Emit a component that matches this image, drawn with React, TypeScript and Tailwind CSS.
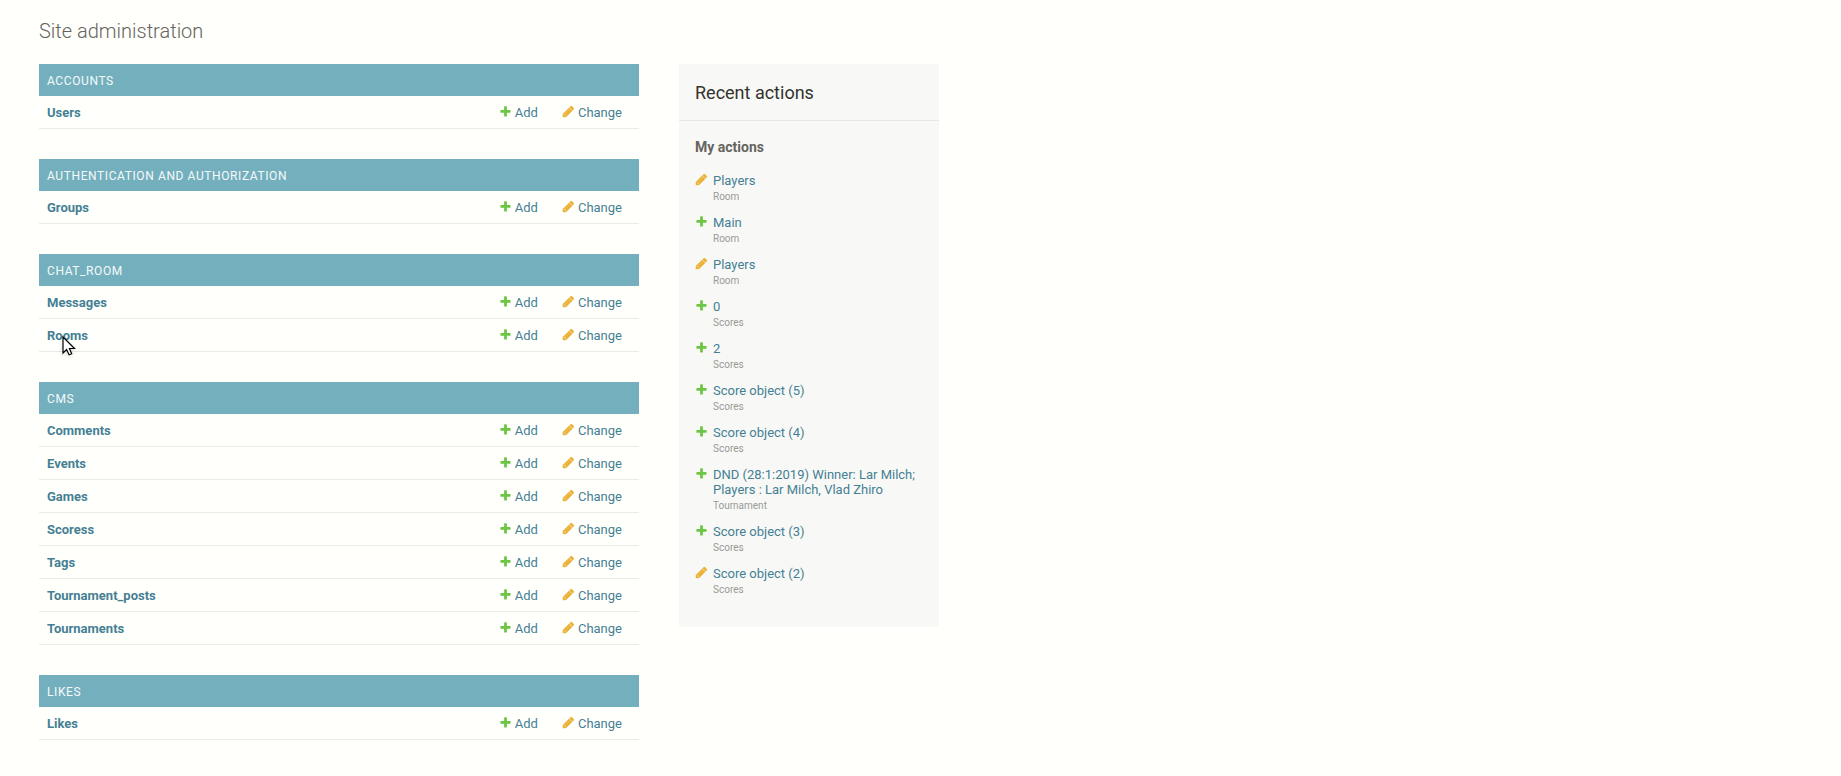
type Kind = 'add' | 'change';

interface AppModule {
  name: string;
  models: string[];
}

interface Action {
  kind: Kind;
  label: string;
  type: string;
}

const modules: AppModule[] = [
  { name: 'Accounts', models: ['Users'] },
  { name: 'Authentication and Authorization', models: ['Groups'] },
  { name: 'Chat_room', models: ['Messages', 'Rooms'] },
  {
    name: 'CMS',
    models: ['Comments', 'Events', 'Games', 'Scoress', 'Tags', 'Tournament_posts', 'Tournaments'],
  },
  { name: 'Likes', models: ['Likes'] },
];

const actions: Action[] = [
  { kind: 'change', label: 'Players', type: 'Room' },
  { kind: 'add', label: 'Main', type: 'Room' },
  { kind: 'change', label: 'Players', type: 'Room' },
  { kind: 'add', label: '0', type: 'Scores' },
  { kind: 'add', label: '2', type: 'Scores' },
  { kind: 'add', label: 'Score object (5)', type: 'Scores' },
  { kind: 'add', label: 'Score object (4)', type: 'Scores' },
  {
    kind: 'add',
    label: 'DND (28:1:2019) Winner: Lar Milch; Players : Lar Milch, Vlad Zhiro',
    type: 'Tournament',
  },
  { kind: 'add', label: 'Score object (3)', type: 'Scores' },
  { kind: 'change', label: 'Score object (2)', type: 'Scores' },
];

function KindIcon({ kind }: { kind: Kind }) {
  return (
    <svg className="size-[13px] shrink-0" viewBox="0 0 1792 1792" aria-hidden="true">
      {kind === 'add' ? (
        <path
          fill="#6cc644"
          d="M1600 796v192q0 40-28 68t-68 28h-416v416q0 40-28 68t-68 28h-192q-40 0-68-28t-28-68v-416h-416q-40 0-68-28t-28-68v-192q0-40 28-68t68-28h416v-416q0-40 28-68t68-28h192q40 0 68 28t28 68v416h416q40 0 68 28t28 68z"
        />
      ) : (
        <>
          <path fill="#f4d592" d="M960 416l416 416-832 832h-416v-416z" />
          <path
            fill="#ebb23a"
            stroke="#ebb23a"
            strokeWidth="50"
            d="M491 1536l91-91-235-235-91 91v107h128v128h107zm523-928q0-22-22-22-10 0-17 7l-542 542q-7 7-7 17 0 22 22 22 10 0 17-7l542-542q7-7 7-17zm-54-192l416 416-832 832h-416v-416zm683 96q0 53-37 90l-166 166-416-416 166-165q36-38 90-38 53 0 91 38l235 234q37 39 37 91z"
          />
        </>
      )}
    </svg>
  );
}

function RowLink({ kind, label }: { kind: Kind; label: string }) {
  return (
    <a href="#" className="flex gap-[3px]">
      <KindIcon kind={kind} />
      {label}
    </a>
  );
}

function Pointer() {
  return (
    <svg
      className="absolute left-[23px] top-[17px] h-5 w-3.5 drop-shadow-sm"
      viewBox="0 0 14 20"
      aria-hidden="true"
    >
      <path
        d="M1 1v16l3.6-3.4 2.5 5.2 2.6-1.1-2.3-5.2h5.1z"
        fill="#fff"
        stroke="#000"
        strokeWidth="1.2"
      />
    </svg>
  );
}

function ModuleTable({ module }: { module: AppModule }) {
  return (
    <table className="w-full border-collapse text-left">
      <caption className="bg-[#74afbe] px-2 pt-[9px] pb-[7px] text-left text-xs leading-4 tracking-wider text-[#f4fafa] uppercase">
        {module.name}
      </caption>
      <tbody>
        {module.models.map((model) => (
          <tr key={model} className="border-b border-[#e9ebe8]">
            <th scope="row" className="relative w-full px-2 pt-[9px] pb-[7px] font-bold">
              <a href="#">{model}</a>
              {model === 'Rooms' && <Pointer />}
            </th>
            <td className="pt-[9px] pr-4 pb-[7px] pl-2">
              <RowLink kind="add" label="Add" />
            </td>
            <td className="pt-[9px] pr-[17px] pb-[7px] pl-2">
              <RowLink kind="change" label="Change" />
            </td>
          </tr>
        ))}
      </tbody>
    </table>
  );
}

export default function App() {
  return (
    <div className="min-h-screen bg-[#fffffc] px-[39px] pt-[19px] pb-9 font-['Roboto',sans-serif] text-[13px] leading-4 text-[#457f94]">
      <h1 className="mb-[21px] text-xl leading-6 font-light text-[#666460]">
        Site administration
      </h1>
      <div className="flex items-start gap-10">
        <main className="flex max-w-[600px] flex-1 flex-col gap-[30px]">
          {modules.map((module) => (
            <ModuleTable key={module.name} module={module} />
          ))}
        </main>
        <aside className="w-[260px] bg-[#f8f9f6] pb-[31px]">
          <h2 className="border-b border-[#e6e8e5] px-4 pt-[18px] pb-4 text-lg leading-[22px] text-[#333330]">
            Recent actions
          </h2>
          <div className="px-4 pt-[18px]">
            <h3 className="mb-[18px] text-sm leading-4 font-bold text-[#666460]">My actions</h3>
            <ul className="flex flex-col gap-3">
              {actions.map((action, index) => (
                <li key={index} className="flex gap-[5px]">
                  <KindIcon kind={action.kind} />
                  <div>
                    <a href="#" className="block leading-[15px]">
                      {action.label}
                    </a>
                    <span className="block pt-0.5 text-[10px] leading-[13px] text-[#999996]">
                      {action.type}
                    </span>
                  </div>
                </li>
              ))}
            </ul>
          </div>
        </aside>
      </div>
    </div>
  );
}
